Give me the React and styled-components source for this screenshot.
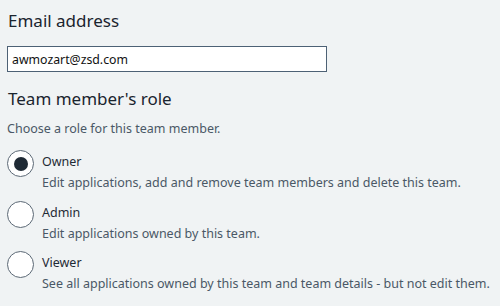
import React from "react";
import styled, { createGlobalStyle } from "styled-components";

const GlobalStyle = createGlobalStyle`
  html, body {
    margin: 0;
    padding: 0;
    background: #f0f3f4;
  }
  body {
    font-family: "Noto Sans", "Open Sans", sans-serif;
  }
`;

const roles = [
  {
    name: "Owner",
    text: "Edit applications, add and remove team members and delete this team.",
  },
  { name: "Admin", text: "Edit applications owned by this team." },
  {
    name: "Viewer",
    text: "See all applications owned by this team and team details - but not edit them.",
  },
];

export default function App() {
  const [role, setRole] = React.useState("Owner");
  const [email, setEmail] = React.useState("awmozart@zsd.com");

  return (
    <Page>
      <GlobalStyle />
      <Heading>Email address</Heading>
      <Input value={email} onChange={(e) => setEmail(e.target.value)} />
      <Heading $top={15}>Team member's role</Heading>
      <Hint>Choose a role for this team member.</Hint>
      <RoleList>
        {roles.map((r) => (
          <RoleRow key={r.name} onClick={() => setRole(r.name)}>
            <Radio $checked={role === r.name} />
            <RoleText>
              <RoleName>{r.name}</RoleName>
              <RoleDesc>{r.text}</RoleDesc>
            </RoleText>
          </RoleRow>
        ))}
      </RoleList>
    </Page>
  );
}

const Page = styled.div`
  display: flex;
  flex-direction: column;
  align-items: flex-start;
  padding: 9px 7px;
  color: #1f2a35;
`;

const Heading = styled.h2`
  margin: ${(p) => p.$top || 0}px 0 0 1px;
  font-size: 17px;
  font-weight: 400;
  line-height: 24px;
  color: #1a242e;
`;

const Input = styled.input`
  box-sizing: border-box;
  margin-top: 13px;
  width: 320px;
  height: 26px;
  padding: 0 4px;
  border: 1.5px solid #4d6175;
  background: #fff;
  font-family: inherit;
  font-size: 12.3px;
  color: #111;
  outline: none;
`;

const Hint = styled.p`
  margin: 9px 0 0 0;
  font-size: 12.5px;
  line-height: 18px;
  color: #4a5866;
`;

const RoleList = styled.div`
  display: flex;
  flex-direction: column;
  gap: 6.5px;
  margin-top: 12px;
`;

const RoleRow = styled.label`
  display: flex;
  gap: 8px;
  cursor: pointer;
`;

const Radio = styled.span`
  box-sizing: border-box;
  flex: none;
  width: 27px;
  height: 27px;
  border-radius: 50%;
  border: 1.5px solid #5b6875;
  background: #fff;
  display: flex;
  align-items: center;
  justify-content: center;
  &::after {
    content: "";
    width: 14px;
    height: 14px;
    border-radius: 50%;
    background: ${(p) => (p.$checked ? "#1f2a35" : "transparent")};
  }
`;

const RoleText = styled.div`
  display: flex;
  flex-direction: column;
  padding-top: 2px;
`;

const RoleName = styled.span`
  font-size: 12.5px;
  line-height: 20px;
  color: #1f2a35;
`;

const RoleDesc = styled.span`
  font-size: 12.5px;
  line-height: 22px;
  color: #4a5866;
`;
